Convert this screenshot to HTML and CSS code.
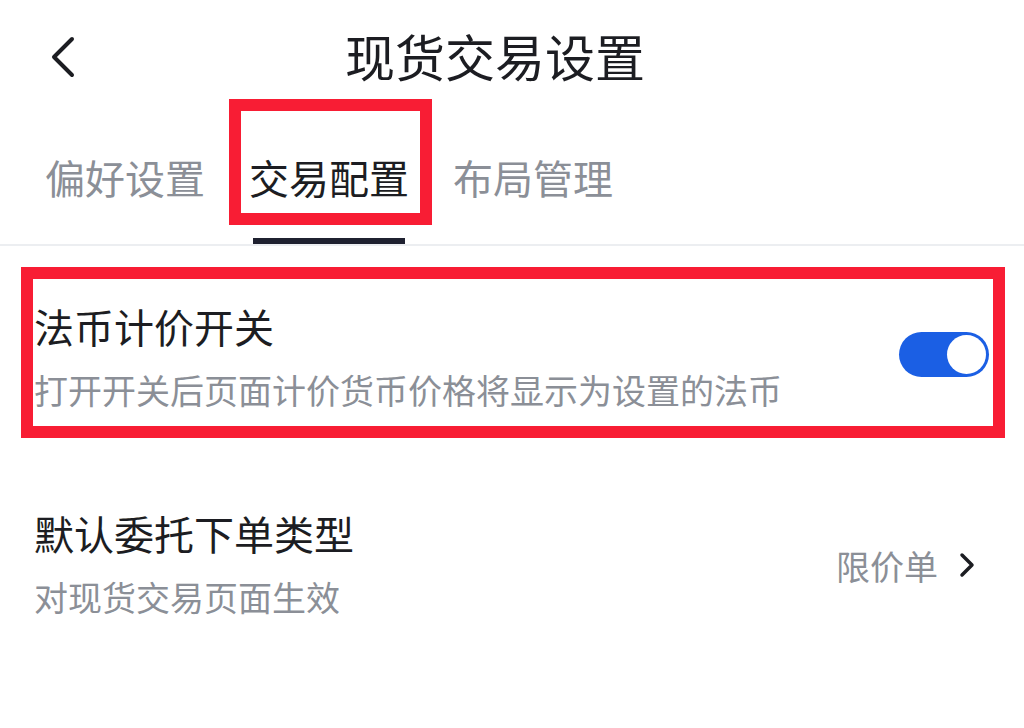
FILE: index.html
```html
<!DOCTYPE html>
<html lang="zh-CN">
<head>
    <meta charset="UTF-8">
    <title>现货交易设置</title>
    <link rel="stylesheet" href="styles.css">
</head>
<body>
    <div class="page">
        <header class="topbar">
            <div class="back">
                <svg width="24" height="44" viewBox="0 0 24 44">
                    <polyline points="21,4 3,22 21,40" fill="none" stroke="#1c1d22" stroke-width="4" stroke-linecap="round" stroke-linejoin="round"/>
                </svg>
            </div>
            <h1>现货交易设置</h1>
            <div></div>
        </header>

        <nav class="tabs">
            <div class="tab">偏好设置</div>
            <div class="tab active">交易配置<span class="mark mark-tab"></span></div>
            <div class="tab">布局管理</div>
        </nav>

        <div class="row row-first">
            <div class="texts">
                <div class="name">法币计价开关</div>
                <div class="hint">打开开关后页面计价货币价格将显示为设置的法币</div>
            </div>
            <div class="switch on"><span class="knob"></span></div>
            <span class="mark mark-row"></span>
        </div>

        <div class="row row-order">
            <div class="texts">
                <div class="name">默认委托下单类型</div>
                <div class="hint">对现货交易页面生效</div>
            </div>
            <div class="value">
                <span>限价单</span>
                <svg width="16" height="26" viewBox="0 0 16 26">
                    <polyline points="3,3 13,13 3,23" fill="none" stroke="#1c1d22" stroke-width="3.5" stroke-linecap="round" stroke-linejoin="round"/>
                </svg>
            </div>
        </div>
    </div>
</body>
</html>
```

FILE: styles.css
```css
* { box-sizing: border-box; }
body {
    margin: 0;
    background: #fff;
    font-family: "Noto Sans CJK SC", "Noto Sans", sans-serif;
    color: #1c1d22;
}
.page {
    width: 1024px;
    height: 728px;
    overflow: hidden;
}
.topbar {
    display: grid;
    grid-template-columns: 1fr auto 1fr;
    align-items: center;
    height: 110px;
    padding-right: 34px;
}
.back {
    padding-left: 51px;
    display: flex;
    align-items: center;
}
.back svg {
    display: block;
    margin-top: 4px;
}
.topbar h1 {
    margin: 0;
    font-size: 50px;
    font-weight: 400;
    line-height: 60px;
}
.tabs {
    display: flex;
    gap: 44px;
    padding: 39px 0 0 45px;
    border-bottom: 2px solid #eceef1;
}
.tab {
    position: relative;
    font-size: 40px;
    line-height: 56px;
    color: #8b8f97;
}
.tab::after {
    content: "";
    display: block;
    height: 6px;
    margin: 33px 4px 0;
}
.tab.active {
    color: #1c1d22;
}
.tab.active::after {
    background: #1f2130;
}
.mark {
    position: absolute;
    border: 12px solid #f81d34;
    pointer-events: none;
}
.mark-tab {
    left: -20px;
    right: -23px;
    top: -50px;
    height: 126px;
}
.row {
    position: relative;
    display: flex;
    align-items: center;
    justify-content: space-between;
    padding: 34px 35px 34px 34px;
}
.row-first {
    padding-top: 48px;
}
.row-order {
    padding-top: 45px;
}
.name {
    font-size: 40px;
    line-height: 64px;
}
.hint {
    font-size: 34px;
    line-height: 64px;
    color: #8b8f97;
}
.mark-row {
    left: 21px;
    right: 19px;
    top: 21px;
    height: 171px;
}
.switch {
    width: 90px;
    height: 45px;
    border-radius: 23px;
    background: #c9ccd2;
    padding: 3px;
    display: flex;
    margin-bottom: 7px;
}
.switch.on {
    background: #1b5fe4;
    justify-content: flex-end;
}
.knob {
    width: 39px;
    height: 39px;
    border-radius: 50%;
    background: #fff;
}
.value {
    display: flex;
    align-items: center;
    gap: 21px;
    margin-right: 14px;
    font-size: 34px;
    color: #8b8f97;
}
.value svg {
    display: block;
}
```
